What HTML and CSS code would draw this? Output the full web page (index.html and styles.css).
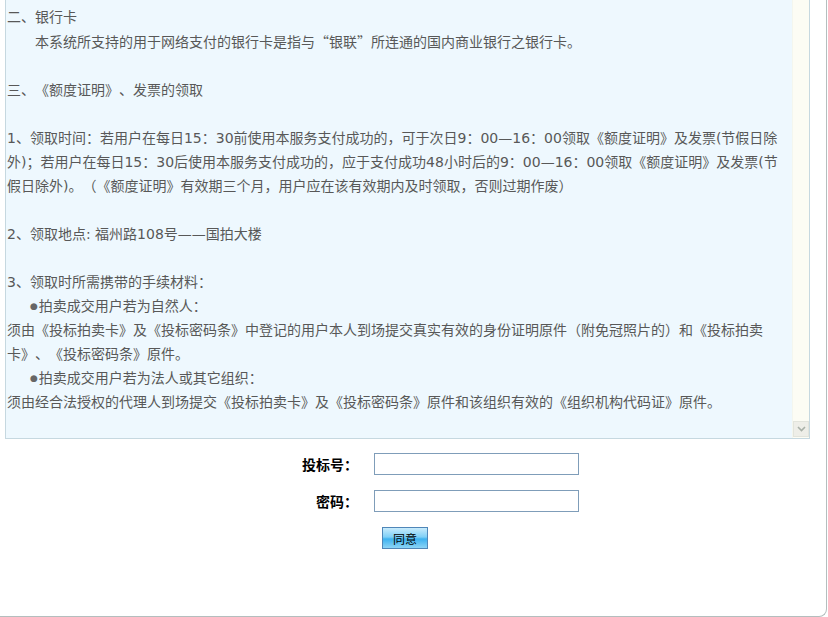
FILE: index.html
```html
<!DOCTYPE html>
<html lang="zh-CN">
<head>
  <meta charset="UTF-8" />
  <title>投标须知</title>
  <link rel="stylesheet" href="styles.css">
</head>
<body>
  <div class="page">
    <div class="notice">
      <div class="notice-text">
        <p>二、银行卡</p>
        <p class="indent gap">本系统所支持的用于网络支付的银行卡是指与<span class="cjk">“银联”</span>所连通的国内商业银行之银行卡。</p>

        <p class="gap">三、《额度证明》、发票的领取</p>

        <p class="gap">1、领取时间：若用户在每日15：30前使用本服务支付成功的，可于次日9：00—16：00领取《额度证明》及发票(节假日除外)；若用户在每日15：30后使用本服务支付成功的，应于支付成功48小时后的9：00—16：00领取《额度证明》及发票(节假日除外)。（《额度证明》有效期三个月，用户应在该有效期内及时领取，否则过期作废）</p>

        <p class="gap">2、领取地点: 福州路108号——国拍大楼</p>

        <p>3、领取时所需携带的手续材料：</p>
        <p class="bullet"><span class="dot">●</span>拍卖成交用户若为自然人：</p>
        <p>须由《投标拍卖卡》及《投标密码条》中登记的用户本人到场提交真实有效的身份证明原件（附免冠照片的）和《投标拍卖卡》、《投标密码条》原件。</p>
        <p class="bullet"><span class="dot">●</span>拍卖成交用户若为法人或其它组织：</p>
        <p>须由经合法授权的代理人到场提交《投标拍卖卡》及《投标密码条》原件和该组织有效的《组织机构代码证》原件。</p>
      </div>
      <div class="scrollbar">
        <div class="arrow">
          <svg width="9" height="6" viewBox="0 0 9 6"><path d="M1 1 L4.5 4.5 L8 1" fill="none" stroke="#a9b0a8" stroke-width="1.6"/></svg>
        </div>
      </div>
    </div>

    <form class="login">
      <label for="bidNo">投标号：</label>
      <input type="text" id="bidNo" autofocus />
      <label for="pwd">密码：</label>
      <input type="password" id="pwd" />
      <span></span>
      <div><button type="button">同意</button></div>
    </form>
  </div>
</body>
</html>
```

FILE: styles.css
```css
body {
  margin: 0;
  background: #fff;
  font-family: "DejaVu Sans", "Noto Sans CJK SC", sans-serif;
  font-size: 14px;
  color: #585858;
  text-spacing-trim: space-all;
}
.page {
  box-sizing: border-box;
  width: 827px;
  height: 617px;
  border-right: 1px solid #b4bebe;
  border-bottom: 1px solid #b4bebe;
  border-bottom-right-radius: 8px;
}
.notice {
  display: flex;
  width: 803px;
  margin-left: 5px;
  background: #eef8fe;
  border: 1px solid #c6d8e0;
  border-top: none;
}
.notice-text {
  flex: 1;
  padding: 5px 7px 24px 1px;
  line-height: 24px;
}
.notice-text p {
  margin: 0;
}
.notice-text .gap {
  margin-bottom: 24px;
}
.cjk {
  font-family: "Noto Sans CJK SC", sans-serif;
}
.indent {
  text-indent: 28px;
}
.bullet {
  padding-left: 23px;
}
.dot {
  font-size: 9px;
  color: #666;
  vertical-align: 2px;
  margin-right: 1px;
}
.scrollbar {
  width: 16px;
  background: #fcfcf4;
  border-left: 1px solid #f4f6ee;
  display: flex;
  flex-direction: column;
  justify-content: flex-end;
}
.arrow {
  width: 14px;
  height: 14px;
  margin: 0 0 1px 0;
  background: #eeeee8;
  border: 1px solid #e2e4dc;
  display: flex;
  align-items: center;
  justify-content: center;
}
.login {
  display: grid;
  grid-template-columns: 353px 205px;
  column-gap: 16px;
  row-gap: 15px;
  align-items: center;
  padding: 14px 0 0 5px;
}
.login label {
  text-align: right;
  font-family: "Noto Sans CJK SC", sans-serif;
  font-weight: bold;
  font-size: 14px;
  line-height: 22px;
  color: #000;
}
.login input {
  box-sizing: border-box;
  width: 205px;
  height: 22px;
  border: 1px solid #7f9db9;
  padding: 0 3px;
  outline: none;
}
.login button {
  margin: 0 0 0 8px;
  width: 46px;
  height: 22px;
  padding: 0;
  border: 1px solid #4f86b8;
  background: linear-gradient(#c8ebfc, #7fd0f7 45%, #3db2f0 55%, #8cd4f6);
  font-family: "Noto Sans CJK SC", sans-serif;
  font-size: 12px;
  color: #000;
  cursor: pointer;
}
```
